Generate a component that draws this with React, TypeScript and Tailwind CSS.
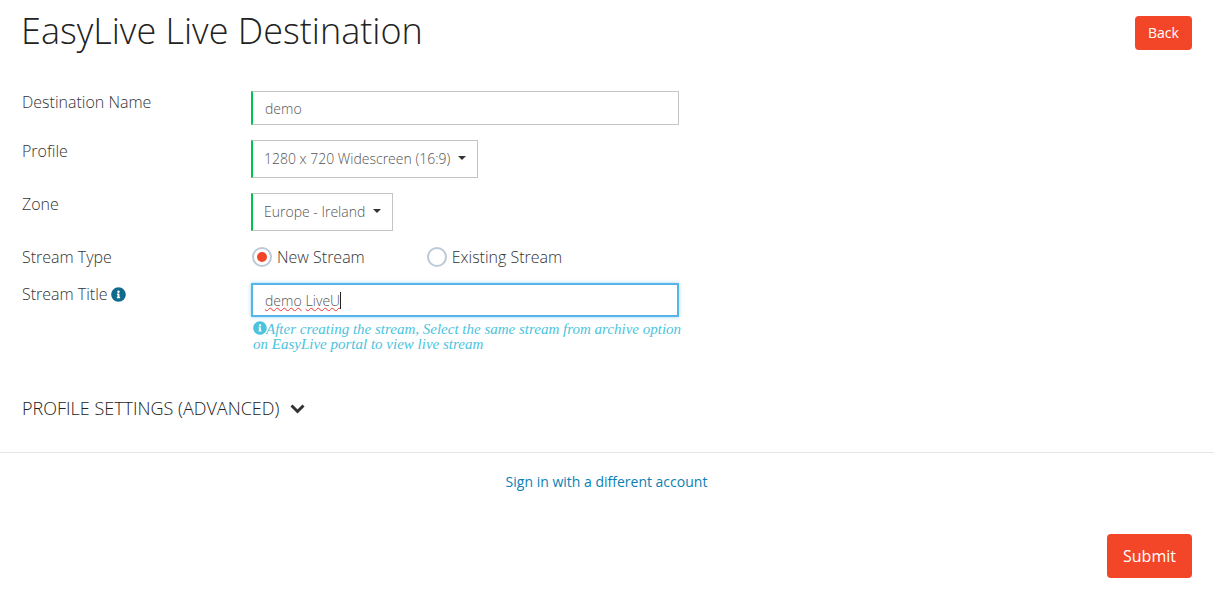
import React from "react";
import { FaInfoCircle } from "react-icons/fa";

function Caret() {
  return <span className="ml-2 inline-block h-0 w-0 border-x-[4px] border-t-[4px] border-x-transparent border-t-[#333333]" />;
}

function Label({ children, className = "" }: { children: React.ReactNode; className?: string }) {
  return <div className={`w-[229px] shrink-0 text-[16px] font-light leading-[22px] text-[#333333] ${className}`}>{children}</div>;
}

function Select({ text }: { text: string }) {
  return (
    <div className="flex h-[38px] items-center border border-l-[2px] border-[#c4c4c4] border-l-[#00c250] px-[11px] pb-[2px] text-[14px] font-light text-[#555555]">
      <span>{text}</span>
      <Caret />
    </div>
  );
}

function Radio({ on, label }: { on?: boolean; label: string }) {
  return (
    <div className="flex items-center gap-[5px]">
      <span className="flex h-[20px] w-[20px] items-center justify-center rounded-full border-[2.5px] border-[#bccad7] bg-white">
        {on && <span className="h-[10px] w-[10px] rounded-full bg-[#f34629]" />}
      </span>
      <span className="text-[16px] font-light leading-[22px] text-[#333333]">{label}</span>
    </div>
  );
}

export default function App() {
  return (
    <div className="h-[611px] overflow-hidden bg-white font-['Open_Sans',sans-serif]">
      <header className="flex items-start justify-between px-[22px] pt-[6px]">
        <h1 className="-ml-px text-[36px] font-light leading-[50px] text-[#222222]">EasyLive Live Destination</h1>
        <button className="mt-[10px] h-[34px] w-[57px] rounded-[4px] bg-[#f34629] pb-[2px] text-[14px] text-white">Back</button>
      </header>

      <form className="mt-[35px] px-[22px]">
        <div className="flex">
          <Label>Destination Name</Label>
          <div className="flex h-[34px] w-[428px] items-center border border-l-[2px] border-[#c4c4c4] border-l-[#00c250] pl-[12px] text-[14px] font-light text-[#555555]">demo</div>
        </div>
        <div className="mt-[15px] flex">
          <Label>Profile</Label>
          <Select text="1280 x 720 Widescreen (16:9)" />
        </div>
        <div className="mt-[15px] flex">
          <Label>Zone</Label>
          <Select text="Europe - Ireland" />
        </div>
        <div className="mt-[15px] flex h-[22px] items-center">
          <Label>Stream Type</Label>
          <div className="ml-px flex gap-[62px]">
            <Radio on label="New Stream" />
            <Radio label="Existing Stream" />
          </div>
        </div>
        <div className="mt-[15px] flex items-start">
          <Label className="flex items-center gap-[4px]">
            Stream Title <FaInfoCircle className="-ml-px text-[15px] text-[#0f6a8b]" />
          </Label>
          <div className="w-[432px]">
            <div className="flex h-[34px] w-[428px] items-center border-2 border-[#55b4ea] pl-[12px] text-[14px] font-light text-[#555555] shadow-[0_0_4px_rgba(85,180,234,0.55)]">
              <span className="underline decoration-[#f03030] decoration-wavy decoration-1 underline-offset-1">demo</span>
              <span className="ml-[4px] underline decoration-[#f03030] decoration-wavy decoration-1 underline-offset-1">LiveU</span>
              <span className="h-[17px] w-px bg-[#222222]" />
            </div>
            <p className="ml-[2px] mt-[4px] font-['Liberation_Serif',serif] text-[15px] italic leading-[15px] text-[#4cc3dd]">
              <FaInfoCircle className="-mr-px inline-block align-[-1.5px] text-[14px]" />
              After creating the stream, Select the same stream from archive option on EasyLive portal to view live stream
            </p>
          </div>
        </div>
        <div className="mt-[44px] flex items-center gap-[11px] text-[18px] font-light leading-[24px] text-[#222222]">
          <span>PROFILE SETTINGS (ADVANCED)</span>
          <svg width="15" height="10" viewBox="0 0 15 10" className="mt-[3px]" fill="none" stroke="#333333" strokeWidth="3">
            <path d="M1.5 1.5 L7.5 7.5 L13.5 1.5" />
          </svg>
        </div>
      </form>

      <hr className="mt-[32px] border-[#e5e5e5]" />

      <div className="mt-[19px] pr-[1px] text-center text-[14px] leading-[20px] text-[#0b7fb5]">Sign in with a different account</div>

      <div className="mt-[42px] flex justify-end px-[22px]">
        <button className="h-[44px] w-[85px] rounded-[4px] bg-[#f34629] text-[16px] text-white">Submit</button>
      </div>
    </div>
  );
}
